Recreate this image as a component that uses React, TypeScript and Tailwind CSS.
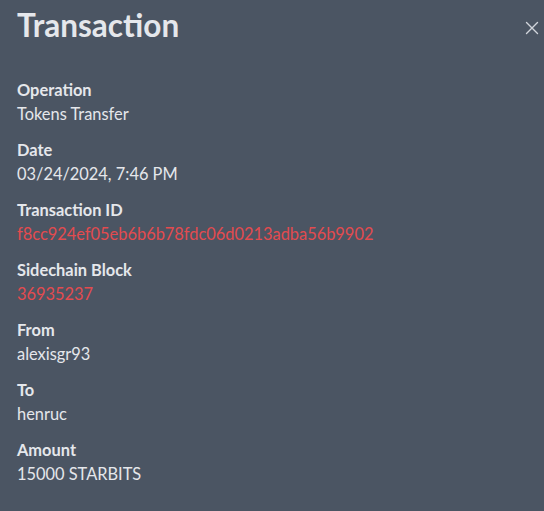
const rows: { label: string; value: string; red?: boolean }[] = [
  { label: "Operation", value: "Tokens Transfer" },
  { label: "Date", value: "03/24/2024, 7:46 PM" },
  { label: "Transaction ID", value: "f8cc924ef05eb6b6b78fdc06d0213adba56b9902", red: true },
  { label: "Sidechain Block", value: "36935237", red: true },
  { label: "From", value: "alexisgr93" },
  { label: "To", value: "henruc" },
  { label: "Amount", value: "15000 STARBITS" },
];

export default function App() {
  return (
    <div className="min-h-[511px] w-[544px] bg-[#4b5563] text-[#e5e7eb] font-['Lato',sans-serif]">
      <div className="flex items-start justify-between pl-[17px] pr-[5px] pt-[5px]">
        <h2 className="text-[31.5px] leading-[40px] font-bold">Transaction</h2>
        <button className="mt-[16px] text-[#d1d5db]">
          <svg width="14" height="14" viewBox="0 0 14 14" fill="none" stroke="currentColor" strokeWidth="1.4" strokeLinecap="round">
            <path d="M1.5 1.5l11 11M12.5 1.5l-11 11" />
          </svg>
        </button>
      </div>
      <div className="mt-[33px] flex flex-col gap-3 px-[17px]">
        {rows.map((r) => (
          <div key={r.label} className="text-[16.4px] leading-6">
            <div className="font-bold">{r.label}</div>
            <div className={r.red ? "text-[#e34b4f]" : ""}>{r.value}</div>
          </div>
        ))}
      </div>
    </div>
  );
}
